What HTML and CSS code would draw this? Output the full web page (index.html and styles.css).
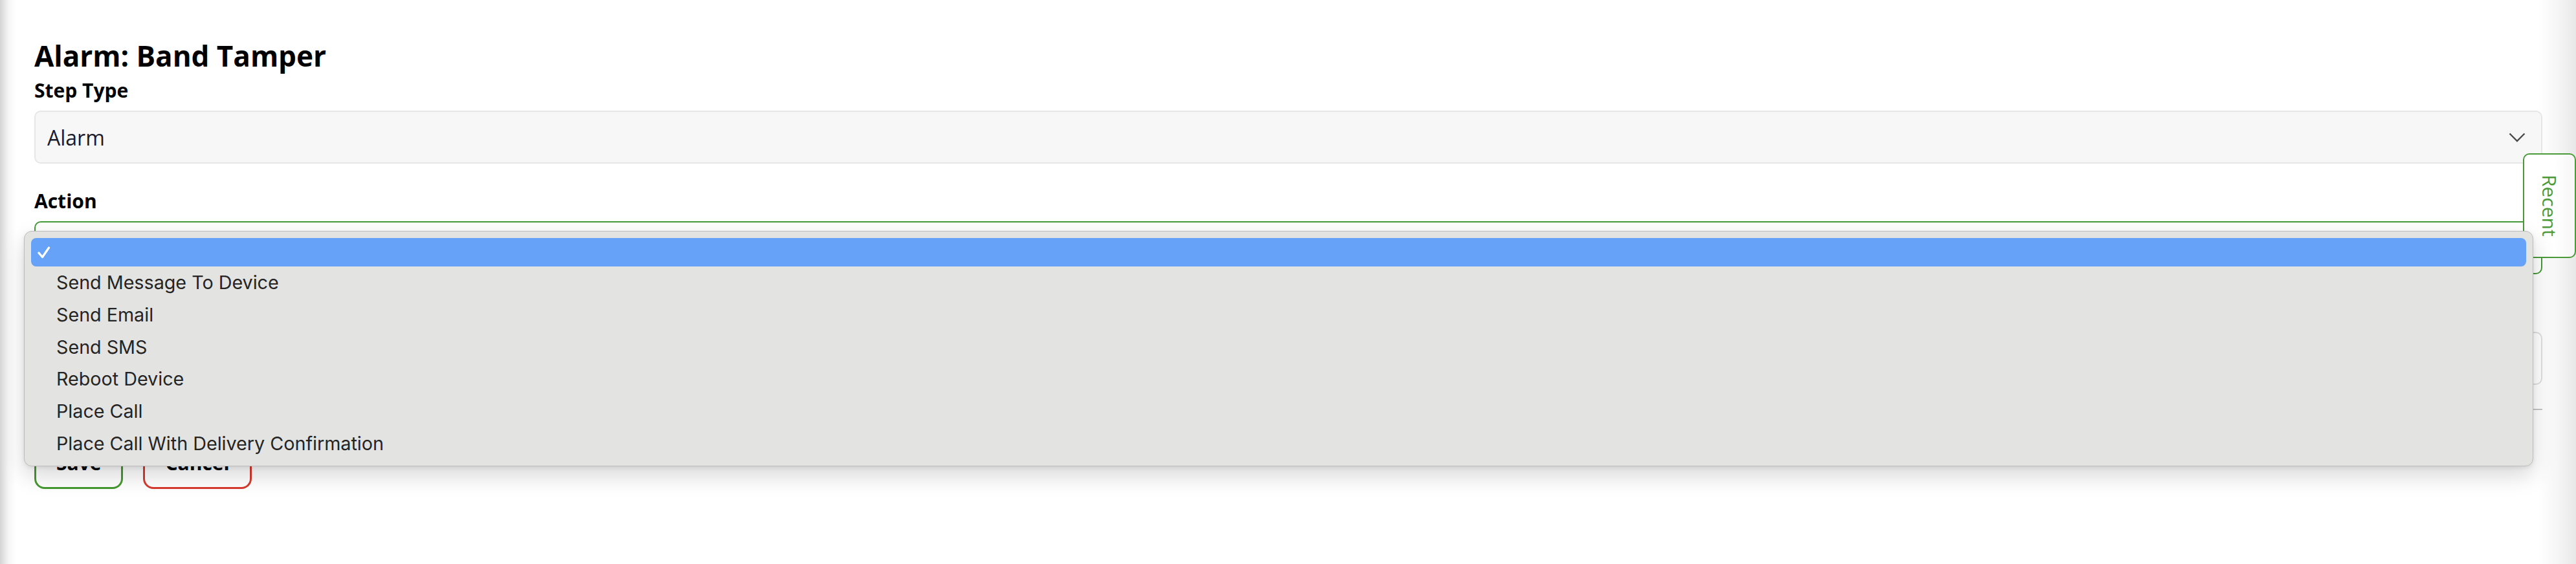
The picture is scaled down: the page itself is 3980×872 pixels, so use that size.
FILE: index.html
```html
<!DOCTYPE html>
<html lang="en">
<head>
    <meta charset="UTF-8">
    <meta name="viewport" content="width=device-width, initial-scale=1.0">
    <title>Alarm: Band Tamper</title>
    <link rel="stylesheet" href="styles.css">
</head>
<body>
    <div class="page">
        <h1 class="title">Alarm: Band Tamper</h1>

        <div class="field">
            <label class="field-label">Step Type</label>
            <div class="select">
                <span>Alarm</span>
                <svg class="chevron" width="26" height="15" viewBox="0 0 26 15">
                    <polyline points="1.5,1.5 13,13 24.5,1.5" />
                </svg>
            </div>
        </div>

        <div class="field">
            <label class="field-label">Action</label>
            <div class="select select-open"></div>
        </div>

        <div class="field">
            <div class="field-label"></div>
            <div class="input"></div>
        </div>

        <hr class="divider">

        <div class="actions">
            <button class="btn btn-save">Save</button>
            <button class="btn btn-cancel">Cancel</button>
        </div>
    </div>

    <div class="recent-tab"><span>Recent</span></div>

    <div class="options">
        <div class="option option-selected">
            <svg class="check" width="20" height="19" viewBox="0 0 20 19">
                <polyline points="2,10 7.5,16.5 17.5,2" />
            </svg>
        </div>
        <div class="option">Send Message To Device</div>
        <div class="option">Send Email</div>
        <div class="option">Send SMS</div>
        <div class="option">Reboot Device</div>
        <div class="option">Place Call</div>
        <div class="option">Place Call With Delivery Confirmation</div>
    </div>
</body>
</html>
```

FILE: styles.css
```css
body {
    margin: 0;
    height: 100vh;
    overflow: hidden;
    font-family: 'Open Sans', sans-serif;
    color: #000;
    background: linear-gradient(to right, #d4d4d4 0, #e4e4e4 6px, #f5f5f5 13px, #fff 24px, #fff calc(100% - 58px), #f4f4f4 calc(100% - 24px), #e7e7e7 100%);
}
.page {
    padding: 60px 52px 0 53px;
}
.title {
    margin: 0;
    font-size: 44px;
    font-weight: 700;
    line-height: 52px;
}
.field-label {
    display: block;
    height: 36px;
    margin: 10px 0 13px;
    font-size: 30px;
    font-weight: 700;
    line-height: 36px;
}
.field + .field .field-label {
    margin-top: 40px;
}
.select, .input {
    box-sizing: border-box;
    height: 82px;
    border: 2px solid #e6e6e6;
    border-radius: 10px;
}
.select {
    display: flex;
    align-items: center;
    justify-content: space-between;
    padding: 0 24px 0 18px;
    background: #f7f7f7;
    color: #1b1b2e;
    font-size: 32px;
}
.chevron polyline {
    fill: none;
    stroke: #4a4a4a;
    stroke-width: 2.4;
}
.select-open {
    background: #fff;
    border-color: #46993a;
}
.input {
    background: #fff;
    border-color: #dedede;
}
.divider {
    margin: 37px 0 0;
    border: 0;
    border-top: 2px solid #c4c4c6;
}
.actions {
    display: flex;
    gap: 31px;
    margin-top: 40px;
}
.btn {
    height: 82px;
    padding: 0 31px;
    background: #fff;
    border: 3px solid;
    border-radius: 16px;
    font-family: 'Open Sans', sans-serif;
    font-size: 30px;
    font-weight: 700;
    color: #000;
}
.btn-save {
    border-color: #45982f;
}
.btn-cancel {
    border-color: #d8392e;
}
.recent-tab {
    position: absolute;
    top: 237px;
    left: 3898px;
    box-sizing: border-box;
    width: 82px;
    height: 162px;
    display: flex;
    align-items: center;
    justify-content: center;
    background: linear-gradient(to right, #fff 60%, #f6f6f6);
    border: 2px solid #4a9a3a;
    border-radius: 10px;
    color: #4a9a3a;
    font-size: 30px;
}
.recent-tab span {
    writing-mode: vertical-rl;
}
.options {
    position: absolute;
    top: 357px;
    left: 37px;
    width: 3877px;
    box-sizing: border-box;
    padding: 10px;
    background: #e3e3e2;
    border: 1px solid #bcbcbc;
    border-radius: 12px;
    box-shadow: 0 14px 34px rgba(0, 0, 0, 0.16), 0 2px 6px rgba(0, 0, 0, 0.08);
    font-family: Inter, 'Liberation Sans', sans-serif;
    font-size: 28.7px;
    color: #242424;
}
.option {
    height: 49.7px;
    display: flex;
    align-items: center;
    padding-left: 39px;
}
.option-selected {
    height: 44px;
    padding-left: 10px;
    background: #66a3f8;
    border-radius: 8px;
}
.check polyline {
    fill: none;
    stroke: #fff;
    stroke-width: 3.2;
    stroke-linecap: round;
    stroke-linejoin: round;
}
```
